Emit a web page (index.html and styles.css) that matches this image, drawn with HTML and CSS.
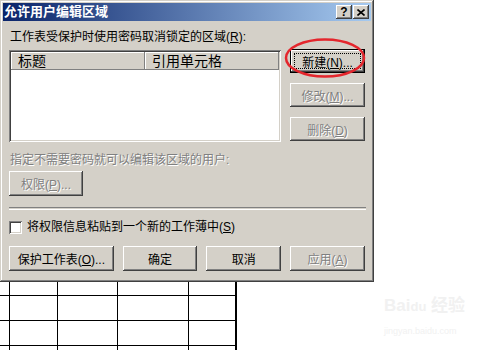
FILE: index.html
```html
<!DOCTYPE html>
<html lang="zh-CN">
<head>
  <meta charset="UTF-8" />
  <meta name="viewport" content="width=device-width, initial-scale=1" />
  <title>允许用户编辑区域</title>
  <link rel="stylesheet" href="styles.css">
</head>
<body>
  <div class="sheet"></div>

  <div class="dialog">
    <div class="titlebar">
      <span class="title">允许用户编辑区域</span>
      <div class="title-btns">
        <span class="tbtn">?</span>
        <span class="tbtn">
          <svg width="8" height="7" viewBox="0 0 8 7"><path d="M0.5 0.5 L7.5 6.5 M7.5 0.5 L0.5 6.5" stroke="#000" stroke-width="1.6"/></svg>
        </span>
      </div>
    </div>

    <div class="content">
      <div class="label">工作表受保护时使用密码取消锁定的区域(<u>R</u>):</div>

      <div class="main-row">
        <div class="listbox">
          <div class="list-head">
            <div class="head-cell col-title">标题</div>
            <div class="head-cell col-ref">引用单元格</div>
          </div>
        </div>
        <div class="side-btns">
          <button class="btn default">新建(<u>N</u>)...</button>
          <button class="btn disabled">修改(<u>M</u>)...</button>
          <button class="btn disabled">删除(<u>D</u>)</button>
        </div>
      </div>

      <div class="label disabled-text users">指定不需要密码就可以编辑该区域的用户:</div>
      <button class="btn disabled perm">权限(<u>P</u>)...</button>

      <div class="separator"></div>

      <label class="check-row">
        <span class="checkbox"></span>
        <span>将权限信息粘贴到一个新的工作薄中(<u>S</u>)</span>
      </label>

      <div class="bottom-btns">
        <button class="btn wide">保护工作表(<u>O</u>)...</button>
        <button class="btn">确定</button>
        <button class="btn">取消</button>
        <button class="btn disabled">应用(<u>A</u>)</button>
      </div>
    </div>

    <svg class="mark" width="84" height="44" viewBox="0 0 84 44">
      <ellipse cx="41" cy="21" rx="39" ry="18.5" fill="none" stroke="#e4262d" stroke-width="2.5"/>
    </svg>
  </div>

  <div class="watermark">
    <div class="wm-logo">Bai<span class="wm-du">du</span> 经验</div>
    <div class="wm-url">jingyan.baidu.com</div>
  </div>
</body>
</html>
```

FILE: styles.css
```css
body {
  margin: 0;
  background: #fff;
  width: 500px;
  height: 350px;
  overflow: hidden;
  position: relative;
  font-family: "Liberation Sans", "Noto Sans CJK SC", sans-serif;
}
u {
  text-decoration: underline;
  text-underline-offset: 1px;
}

/* spreadsheet behind the dialog */
.sheet {
  width: 235px;
  height: 350px;
  border-right: 2px solid #000;
  background:
    linear-gradient(#000, #000) 9px 0 / 1px 100% no-repeat,
    linear-gradient(#000, #000) 57px 0 / 1px 100% no-repeat,
    linear-gradient(#000, #000) 117px 0 / 1px 100% no-repeat,
    linear-gradient(#000, #000) 188px 0 / 1px 100% no-repeat,
    linear-gradient(to bottom, #000 0 1px, transparent 1px 25px) 0 20px / 100% 25px repeat-y;
}

/* dialog window */
.dialog {
  position: absolute;
  top: 0;
  left: 0;
  width: 374px;
  height: 282px;
  box-sizing: border-box;
  padding: 3px;
  background: #d4d0c8;
  box-shadow: inset -1px -1px #404040, inset 1px 1px #d4d0c8, inset -2px -2px #808080, inset 2px 2px #fff;
  font-size: 12px;
  color: #000;
}
.titlebar {
  height: 18px;
  display: flex;
  align-items: center;
  justify-content: space-between;
  padding: 0 2px 0 1px;
  background: linear-gradient(to right, #0a246a, #a6caf0);
}
.title {
  color: #fff;
  font-weight: bold;
  font-size: 13px;
  line-height: 18px;
}
.title-btns {
  display: flex;
  gap: 1px;
}
.tbtn {
  width: 16px;
  height: 14px;
  display: flex;
  align-items: center;
  justify-content: center;
  background: #d4d0c8;
  box-shadow: inset -1px -1px #404040, inset 1px 1px #fff, inset -2px -2px #808080;
  font-weight: bold;
  font-size: 12px;
  line-height: 14px;
}

.content {
  padding: 9px 6px 0 6px;
}
.label {
  line-height: 14px;
  padding-left: 1px;
}
.disabled-text {
  color: #808080;
  text-shadow: 1px 1px #fff;
}

.main-row {
  display: flex;
  margin-top: 6px;
}
.listbox {
  width: 273px;
  height: 92px;
  box-sizing: border-box;
  padding: 2px;
  background: #fff;
  box-shadow: inset 1px 1px #808080, inset -1px -1px #fff, inset 2px 2px #404040, inset -2px -2px #d4d0c8;
}
.list-head {
  display: flex;
  height: 18px;
}
.head-cell {
  background: #d4d0c8;
  box-shadow: inset -1px -1px #808080, inset 1px 1px #fff;
  font-size: 14px;
  line-height: 18px;
  padding-left: 7px;
  box-sizing: border-box;
}
.col-title {
  width: 134px;
}
.col-ref {
  flex: 1;
}

.side-btns {
  display: flex;
  flex-direction: column;
  gap: 10px;
  margin-left: 9px;
  margin-top: -1px;
}

.btn {
  position: relative;
  width: 75px;
  height: 24px;
  padding: 0;
  border: 0;
  background: #d4d0c8;
  box-shadow: inset -1px -1px #404040, inset 1px 1px #fff, inset -2px -2px #808080, inset 2px 2px #d4d0c8;
  font: inherit;
  font-size: 12px;
  color: #000;
  text-align: center;
}
.btn.default {
  box-shadow: inset 0 0 0 1px #000, inset -2px -2px #404040, inset 2px 2px #fff, inset -3px -3px #808080;
}
.btn.default::after {
  content: "";
  position: absolute;
  inset: 4px;
  border: 1px dotted #000;
}
.btn.disabled {
  color: #808080;
  text-shadow: 1px 1px #fff;
}

.users {
  margin-top: 11px;
}
.perm {
  display: block;
  width: 74px;
  height: 25px;
  margin-top: 4px;
}

.separator {
  width: 357px;
  height: 1px;
  margin-top: 11px;
  border-top: 1px solid #808080;
  border-bottom: 1px solid #fff;
}

.check-row {
  display: flex;
  align-items: center;
  gap: 5px;
  margin-top: 10px;
  line-height: 14px;
}
.checkbox {
  width: 13px;
  height: 13px;
  background: #fff;
  box-shadow: inset 1px 1px #808080, inset -1px -1px #fff, inset 2px 2px #404040, inset -2px -2px #d4d0c8;
}

.bottom-btns {
  display: flex;
  gap: 9px;
  margin-top: 12px;
}
.bottom-btns .btn {
  height: 25px;
}
.bottom-btns .wide {
  width: 105px;
}

/* red hand-drawn mark around the new button */
.mark {
  position: absolute;
  left: 284px;
  top: 37px;
}

.watermark {
  position: absolute;
  left: 384px;
  top: 296px;
  color: #f1f1f1;
  font-family: "Liberation Sans", "Noto Sans CJK SC", sans-serif;
}
.wm-logo {
  font-size: 17px;
  font-weight: bold;
  line-height: 20px;
}
.wm-du {
  font-size: 13px;
}
.wm-url {
  font-size: 9px;
  line-height: 12px;
  margin-top: 8px;
}
```
